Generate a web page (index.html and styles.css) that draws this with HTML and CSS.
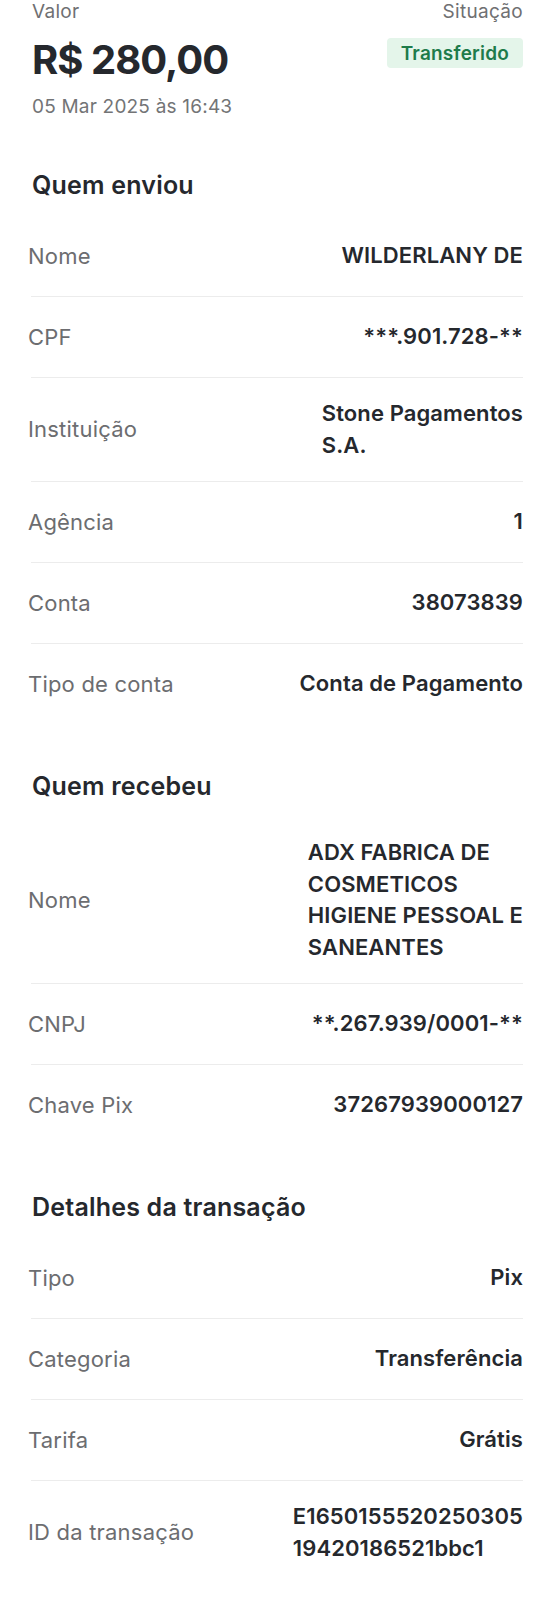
FILE: index.html
```html
<!DOCTYPE html>
<html lang="pt-BR">
<head>
<meta charset="utf-8">
<title>Comprovante</title>
<link rel="stylesheet" href="styles.css">
</head>
<body>
<main class="page">
  <header class="summary">
    <div class="summary-left">
      <div class="caption">Valor</div>
      <div class="amount">R$ 280,00</div>
      <div class="date">05 Mar 2025 às 16:43</div>
    </div>
    <div class="summary-right">
      <div class="caption">Situação</div>
      <span class="badge">Transferido</span>
    </div>
  </header>

  <section class="section">
    <h2 class="section-title">Quem enviou</h2>
    <div class="row"><span class="label">Nome</span><span class="value">WILDERLANY DE</span></div>
    <div class="row"><span class="label">CPF</span><span class="value">***.901.728-**</span></div>
    <div class="row"><span class="label">Instituição</span><span class="value">Stone Pagamentos<br>S.A.</span></div>
    <div class="row"><span class="label">Agência</span><span class="value">1</span></div>
    <div class="row"><span class="label">Conta</span><span class="value">38073839</span></div>
    <div class="row"><span class="label">Tipo de conta</span><span class="value">Conta de Pagamento</span></div>
  </section>

  <section class="section">
    <h2 class="section-title">Quem recebeu</h2>
    <div class="row"><span class="label">Nome</span><span class="value">ADX FABRICA DE<br>COSMETICOS<br>HIGIENE PESSOAL E<br>SANEANTES</span></div>
    <div class="row"><span class="label">CNPJ</span><span class="value">**.267.939/0001-**</span></div>
    <div class="row"><span class="label">Chave Pix</span><span class="value">37267939000127</span></div>
  </section>

  <section class="section section-last">
    <h2 class="section-title">Detalhes da transação</h2>
    <div class="row"><span class="label">Tipo</span><span class="value">Pix</span></div>
    <div class="row"><span class="label">Categoria</span><span class="value">Transferência</span></div>
    <div class="row"><span class="label">Tarifa</span><span class="value">Grátis</span></div>
    <div class="row"><span class="label">ID da transação</span><span class="value">E1650155520250305<br>19420186521bbc1</span></div>
  </section>
</main>
</body>
</html>
```

FILE: styles.css
```css
* { box-sizing: border-box; }

html, body {
  margin: 0;
  padding: 0;
  background: #ffffff;
}

body {
  font-family: Inter, "Noto Sans", "Liberation Sans", sans-serif;
  color: #25282d;
  -webkit-font-smoothing: antialiased;
}

.page {
  padding: 0 30px 0 31px;
}

.summary {
  display: flex;
  justify-content: space-between;
  align-items: flex-start;
}

.summary-left {
  display: flex;
  flex-direction: column;
  padding-left: 1px;
}

.summary-right {
  display: flex;
  flex-direction: column;
  align-items: flex-end;
}

.caption {
  font-size: 19px;
  line-height: 24px;
  letter-spacing: 0.3px;
  color: #6f7072;
}

.amount {
  margin-top: 10px;
  font-size: 40px;
  line-height: 52px;
  font-weight: 700;
  color: #25282d;
  letter-spacing: -1px;
}

.date {
  margin-top: 9px;
  font-size: 19px;
  line-height: 24px;
  letter-spacing: 0.2px;
  color: #737476;
}

.badge {
  margin-top: 14px;
  height: 30px;
  padding: 0 14px;
  display: inline-flex;
  align-items: center;
  border-radius: 4px;
  background: #e4f5ea;
  color: #1e7b4a;
  font-size: 19px;
  font-weight: 600;
  letter-spacing: 0.2px;
}

.section {
  display: flex;
  flex-direction: column;
}

.section-title {
  margin: 51px 0 16px;
  padding-left: 1px;
  font-size: 25px;
  line-height: 30px;
  font-weight: 600;
  letter-spacing: 0.2px;
  color: #25282d;
}

.section + .section .section-title {
  margin-top: 47px;
}

.row {
  display: flex;
  justify-content: space-between;
  align-items: center;
  gap: 16px;
  min-height: 81px;
  padding: 20px 0;
  border-bottom: 1px solid #ececec;
}

.section .row:last-child {
  border-bottom: none;
  min-height: 80px;
}

.section-last .row:last-child {
  padding-bottom: 36px;
  border-bottom: 1px solid #ececec;
}

.label {
  margin-left: -3px;
  font-size: 22px;
  line-height: 31px;
  letter-spacing: 0.2px;
  color: #6c6d70;
  white-space: nowrap;
}

.value {
  max-width: 246px;
  font-size: 22px;
  line-height: 31.5px;
  font-weight: 600;
  letter-spacing: 0.1px;
  color: #25282d;
  text-align: left;
}
```
